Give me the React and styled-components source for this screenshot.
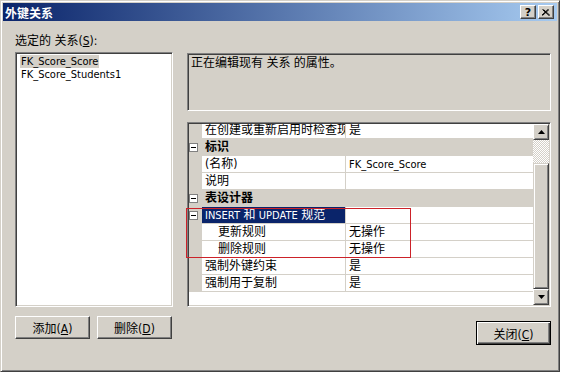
import React from 'react'
import styled, { createGlobalStyle, css } from 'styled-components'

const FACE = '#d4d0c8'
const NAVY = '#0a246a'

const GlobalStyle = createGlobalStyle`
  html, body { margin: 0; padding: 0; background: #fff; }
  body {
    font-family: "DejaVu Sans Condensed", "Liberation Sans", "Noto Sans CJK SC", sans-serif;
    font-size: 12px;
    color: #000;
  }
`

const raised = css`
  border: 1px solid;
  border-color: #fff #404040 #404040 #fff;
  box-shadow: inset -1px -1px #808080;
`

const sunken = css`
  border: 1px solid;
  border-color: #808080 #fff #fff #808080;
  box-shadow: inset 1px 1px #404040, inset -1px -1px ${FACE};
  padding: 1px;
`

const Window = styled.div`
  box-sizing: border-box;
  width: 560px;
  height: 372px;
  background: ${FACE};
  border: 1px solid;
  border-color: ${FACE} #404040 #404040 ${FACE};
  box-shadow: inset 1px 1px #fff, inset -1px -1px #808080;
  padding: 2px;
  display: flex;
  flex-direction: column;
`

const TitleBar = styled.div`
  flex: none;
  height: 18px;
  display: flex;
  align-items: center;
  padding: 0 3px 0 2px;
  background: linear-gradient(to right, ${NAVY}, #a6caf0);
  color: #fff;
  font-weight: bold;
`

const Title = styled.span`
  flex: 1;
`

const CapButton = styled.button`
  box-sizing: border-box;
  width: 16px;
  height: 14px;
  padding: 0;
  margin-left: ${p => p.$gap || 0}px;
  background: ${FACE};
  ${raised};
  display: flex;
  align-items: center;
  justify-content: center;
  font: bold 11px "DejaVu Sans", sans-serif;
  color: #000;
`

const Body = styled.div`
  flex: 1;
  display: grid;
  grid-template-columns: 158px 364px;
  column-gap: 14px;
  padding-left: 12px;
`

const LeftCol = styled.div`
  display: flex;
  flex-direction: column;
  padding-top: 11px;
`

const RightCol = styled.div`
  display: flex;
  flex-direction: column;
  padding-top: 32px;
`

const Label = styled.div`
  height: 18px;
  line-height: 18px;
  margin-bottom: 2px;
`

const ListBox = styled.div`
  box-sizing: border-box;
  height: 255px;
  background: #fff;
  ${sunken};
  padding-top: 2px;
  display: flex;
  flex-direction: column;
  align-items: flex-start;
`

const ListItem = styled.div`
  height: 13px;
  line-height: 13px;
  font-size: 11px;
  padding: 0 1px;
  margin-left: 3px;
  background: ${p => (p.$selected ? FACE : 'transparent')};
`

const ButtonRow = styled.div`
  display: flex;
  gap: 7px;
  margin-top: 9px;
`

const Button = styled.button`
  box-sizing: border-box;
  width: 75px;
  height: ${p => (p.$default ? 24 : 23)}px;
  padding: 0;
  font: inherit;
  color: #000;
  background: ${FACE};
  ${p =>
    p.$default
      ? css`
          border: 1px solid #000;
          box-shadow: inset 1px 1px #fff, inset -1px -1px #404040, inset -2px -2px #808080;
        `
      : raised};
`

const Desc = styled.div`
  box-sizing: border-box;
  height: 58px;
  ${sunken};
  padding: 1px 3px;
  line-height: 16px;
`

const Grid = styled.div`
  position: relative;
  box-sizing: border-box;
  height: 185px;
  margin-top: 11px;
  ${sunken};
  display: flex;
`

const Viewport = styled.div`
  flex: 1;
  background: #fff;
  overflow: hidden;
`

const Rows = styled.div`
  margin-top: -2px;
`

const Row = styled.div`
  display: grid;
  grid-template-columns: 13px 144px 1fr;
  height: 17px;
  background: ${p => (p.$category ? FACE : '#fff')};
`

const Gutter = styled.div`
  background: ${FACE};
  display: flex;
  align-items: center;
`

const Cell = styled.div`
  box-sizing: border-box;
  border-bottom: 1px solid ${FACE};
  line-height: 16px;
  white-space: nowrap;
  overflow: hidden;
  padding-left: 3px;
`

const NameCell = styled(Cell)`
  border-right: 1px solid ${FACE};
  padding-left: ${p => (p.$indent ? 16 : 3)}px;
  background: ${p => (p.$selected ? NAVY : 'transparent')};
  color: ${p => (p.$selected ? '#fff' : '#000')};
`

const CategoryCell = styled(Cell)`
  grid-column: 2 / 4;
  font-weight: bold;
  border-bottom: none;
`

const Lat = styled.span`
  font-size: 11px;
`

const ScrollBar = styled.div`
  width: 16px;
  display: flex;
  flex-direction: column;
`

const ScrollButton = styled.div`
  box-sizing: border-box;
  height: 16px;
  background: ${FACE};
  ${raised};
  box-shadow: inset 1px 1px ${FACE}, inset -1px -1px #808080;
  display: flex;
  align-items: center;
  justify-content: center;
`

const Track = styled.div`
  height: ${p => p.$h}px;
  background: repeating-conic-gradient(#fff 0 25%, ${FACE} 0 50%) 0 0 / 2px 2px;
`

const Thumb = styled.div`
  box-sizing: border-box;
  height: ${p => p.$h}px;
  background: ${FACE};
  border: 1px solid;
  border-color: ${FACE} #404040 #404040 ${FACE};
  box-shadow: inset 1px 1px #fff, inset -1px -1px #808080;
`

const Callout = styled.div`
  position: absolute;
  left: -2px;
  top: 85px;
  width: 225px;
  height: 50px;
  box-sizing: border-box;
  border: 1px solid #cc2229;
  pointer-events: none;
`

const CloseRow = styled.div`
  display: flex;
  justify-content: flex-end;
  margin-top: 14px;
`

const Expander = () => (
  <svg width="9" height="9" viewBox="0 0 9 9" style={{ marginLeft: 0, display: 'block' }}>
    <rect x="0.5" y="0.5" width="8" height="8" fill="#fff" stroke="#808080" />
    <path d="M2 4.5h5" stroke="#000" />
  </svg>
)

const Arrow = ({ down }) => (
  <svg width="7" height="4" viewBox="0 0 7 4">
    <path d={down ? 'M0 0h7L3.5 4z' : 'M0 4h7L3.5 0z'} fill="#000" />
  </svg>
)

const CloseGlyph = () => (
  <svg width="8" height="7" viewBox="0 0 8 7">
    <path d="M0.5 0.5L7 6.5M7 0.5L0.5 6.5M1.5 0.5L8 6.5M6 0.5L-0.5 6.5" stroke="#000" strokeWidth="1" />
  </svg>
)

const rows = [
  { name: '在创建或重新启用时检查现有数据', value: '是' },
  { category: '标识' },
  { name: '(名称)', value: <Lat>FK_Score_Score</Lat> },
  { name: '说明', value: '' },
  { category: '表设计器' },
  { name: <><Lat>INSERT</Lat> 和 <Lat>UPDATE</Lat> 规范</>, value: '', expander: true, selected: true },
  { name: '更新规则', value: '无操作', indent: true },
  { name: '删除规则', value: '无操作', indent: true },
  { name: '强制外键约束', value: '是' },
  { name: '强制用于复制', value: '是' },
]

export default function App() {
  return (
    <>
      <GlobalStyle />
      <Window>
        <TitleBar>
          <Title>外键关系</Title>
          <CapButton>?</CapButton>
          <CapButton $gap={2}><CloseGlyph /></CapButton>
        </TitleBar>
        <Body>
          <LeftCol>
            <Label>选定的 关系(<u>S</u>):</Label>
            <ListBox>
              <ListItem $selected>FK_Score_Score</ListItem>
              <ListItem>FK_Score_Students1</ListItem>
            </ListBox>
            <ButtonRow>
              <Button>添加(<u>A</u>)</Button>
              <Button>删除(<u>D</u>)</Button>
            </ButtonRow>
          </LeftCol>
          <RightCol>
            <Desc>正在编辑现有 关系 的属性。</Desc>
            <Grid>
              <Viewport>
                <Rows>
                  {rows.map((r, i) =>
                    r.category ? (
                      <Row key={i} $category>
                        <Gutter><Expander /></Gutter>
                        <CategoryCell>{r.category}</CategoryCell>
                      </Row>
                    ) : (
                      <Row key={i}>
                        <Gutter>{r.expander && <Expander />}</Gutter>
                        <NameCell $indent={r.indent} $selected={r.selected}>{r.name}</NameCell>
                        <Cell>{r.value}</Cell>
                      </Row>
                    )
                  )}
                </Rows>
              </Viewport>
              <ScrollBar>
                <ScrollButton><Arrow /></ScrollButton>
                <Track $h={23} />
                <Thumb $h={126} />
                <ScrollButton><Arrow down /></ScrollButton>
              </ScrollBar>
              <Callout />
            </Grid>
            <CloseRow>
              <Button $default>关闭(<u>C</u>)</Button>
            </CloseRow>
          </RightCol>
        </Body>
      </Window>
    </>
  )
}
